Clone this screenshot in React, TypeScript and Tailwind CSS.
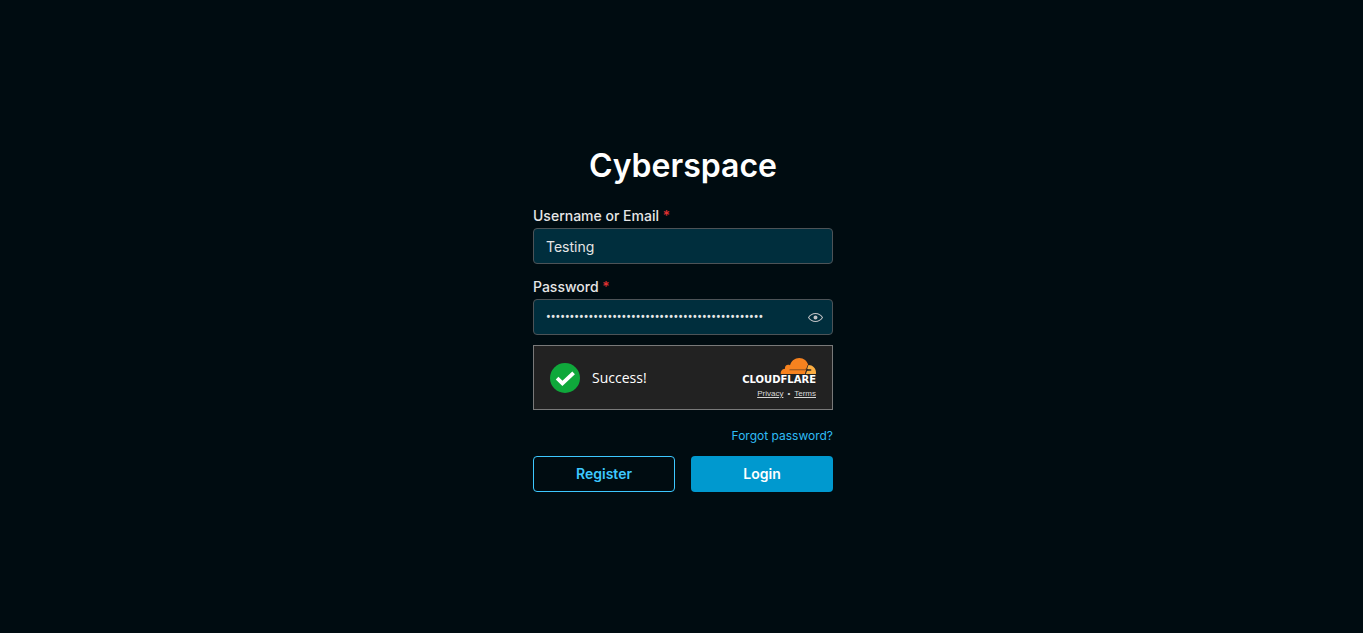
import { FC, ReactNode, useState } from 'react';

const inputClass =
  "w-full h-9 rounded border border-[#4d5357] bg-[#002e3d] px-3 text-sm text-[#e6e6e6] outline-none focus:border-[#0099cf]";

const Label: FC<{ htmlFor: string; children: ReactNode }> = ({ htmlFor, children }) => (
  <label htmlFor={htmlFor} className="block pb-[2px] text-sm leading-5 font-medium text-[#e6e6e6]">
    {children} <span className="text-[#e03131]">*</span>
  </label>
);

const EyeIcon: FC = () => (
  <svg viewBox="0 0 15 15" className="size-[15px]" fill="currentColor" aria-hidden="true">
    <path
      fillRule="evenodd"
      clipRule="evenodd"
      d="M7.5 11C4.803 11 2.53 9.622 1.096 7.5 2.53 5.378 4.803 4 7.5 4s4.97 1.378 6.404 3.5C12.47 9.622 10.197 11 7.5 11Zm0-8C4.308 3 1.656 4.706.076 7.235a.5.5 0 0 0 0 .53C1.656 10.294 4.308 12 7.5 12s5.844-1.706 7.424-4.235a.5.5 0 0 0 0-.53C13.344 4.706 10.692 3 7.5 3Zm0 6.5a2 2 0 1 0 0-4 2 2 0 0 0 0 4Z"
    />
  </svg>
);

const CheckIcon: FC = () => (
  <svg viewBox="0 0 30 30" className="size-[30px]" aria-hidden="true">
    <circle cx="15" cy="15" r="15" fill="#0fa83b" />
    <path d="M7.1 15.2l5.3 5.2L23.6 9.800" fill="none" stroke="#fff" strokeWidth="3.8" />
  </svg>
);

const CloudIcon: FC = () => (
  <svg viewBox="0 0 36 16" className="w-9 h-4" aria-hidden="true">
    <path
      fill="#f6821f"
      d="M.8 16C.4 13.300 2 11 5 10.700c-.4-3 2.300-4.900 5-3.500C11.300 2.900 14.800 0 19.200 0c4.600 0 8 2.900 9 7.100l-2.200 5L25 16Z"
    />
    <path
      fill="#fbad41"
      d="M28.300 7.100c4.300-.1 7.700 3.200 7.700 7.300 0 .6 0 1.100-.1 1.600H25.700l.8-2.500c.2-.6.600-.9 1.200-1l3.300-.3c.4-.1.400-.4 0-.5l-2.700-.2c-1-.1-1.500-.8-1.200-1.700Z"
    />
    <path
      fill="none"
      stroke="#222"
      strokeWidth=".7"
      d="M28 7l-1 3c-.3 1 .2 1.600 1.200 1.700l3 .3-3.400.3c-.7.100-1.200.5-1.400 1.200L25.400 16"
    />
    <path fill="none" stroke="#222" strokeOpacity=".65" strokeWidth=".8" d="M9.500 11.800h15c.9 0 1.300-.3 1.600-1.200" />
  </svg>
);

const Captcha: FC = () => (
  <div className="mt-[10px] flex h-[65px] items-center justify-between border border-[#797979] bg-[#222] px-4 font-['Open_Sans',sans-serif]">
    <div className="flex items-center gap-3">
      <CheckIcon />
      <span className="text-sm text-white">Success!</span>
    </div>
    <div className="flex flex-col items-end">
      <CloudIcon />
      <span className="font-['DejaVu_Sans',sans-serif] text-[10px] leading-3 font-bold text-white">CLOUDFLARE</span>
      <div className="mt-1 flex gap-1 font-['Liberation_Sans',sans-serif] text-[8px] leading-2 text-[#d9d9d9]">
        <a href="#privacy" className="underline">Privacy</a>
        <span>•</span>
        <a href="#terms" className="underline">Terms</a>
      </div>
    </div>
  </div>
);

const App: FC = () => {
  const [visible, setVisible] = useState(false);

  return (
    <main className="flex min-h-screen items-center justify-center bg-[#000c11] pl-[3px] font-[Inter,sans-serif]">
      <form className="w-full max-w-[300px]" onSubmit={(e) => e.preventDefault()}>
        <h1 className="mb-4 text-center text-[32px] leading-[49px] font-semibold text-white">Cyberspace</h1>

        <Label htmlFor="username">Username or Email</Label>
        <input id="username" type="text" defaultValue="Testing" className={inputClass} />

        <div className="mt-[13px]">
          <Label htmlFor="password">Password</Label>
          <div className="relative">
            <input
              id="password"
              type={visible ? 'text' : 'password'}
              defaultValue={'x'.repeat(46)}
              className={`${inputClass} pr-9 font-[Roboto,sans-serif]`}
            />
            <button
              type="button"
              aria-label="Toggle password visibility"
              onClick={() => setVisible(!visible)}
              className="absolute inset-y-0 right-0 flex w-9 items-center justify-center text-[#c1c2c5]"
            >
              <EyeIcon />
            </button>
          </div>
        </div>

        <Captcha />

        <div className="mt-4 mb-[10px] flex justify-end">
          <a href="#forgot" className="text-xs leading-5 text-[#2fbcf5]">Forgot password?</a>
        </div>

        <div className="grid grid-cols-2 gap-4">
          <button type="button" className="h-9 rounded border border-[#3dc8ff] text-sm font-semibold text-[#3dc8ff]">
            Register
          </button>
          <button type="submit" className="h-9 rounded bg-[#0099cf] text-sm font-semibold text-white">
            Login
          </button>
        </div>
      </form>
    </main>
  );
};

export default App;
